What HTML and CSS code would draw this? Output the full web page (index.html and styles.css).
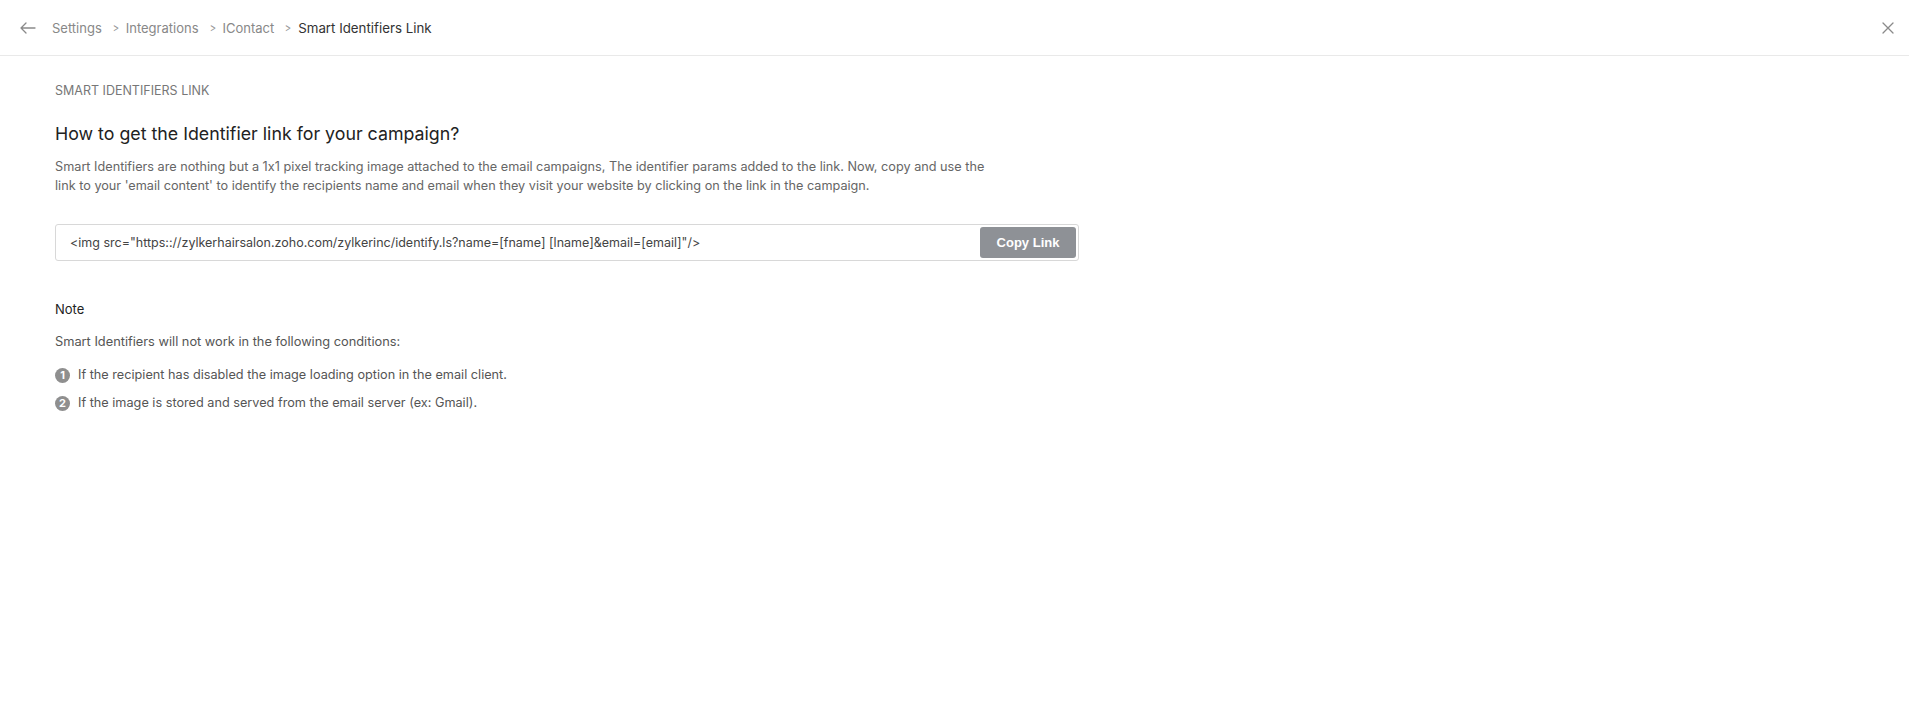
FILE: index.html
```html
<!DOCTYPE html>
<html>
<head>
<meta charset="utf-8">
<link rel="stylesheet" href="styles.css">
</head>
<body>
<header class="topbar">
  <div class="crumbs">
    <span class="back">
      <svg width="16" height="12" viewBox="0 0 16 12"><path d="M6 1L1 6l5 5M1 6h14" fill="none" stroke="#8a8a8a" stroke-width="1.3" stroke-linecap="round" stroke-linejoin="round"/></svg>
    </span>
    <span class="crumb">Settings</span>
    <span class="sep">&gt;</span>
    <span class="crumb">Integrations</span>
    <span class="sep">&gt;</span>
    <span class="crumb">IContact</span>
    <span class="sep">&gt;</span>
    <span class="crumb current">Smart Identifiers Link</span>
  </div>
  <span class="close">
    <svg width="12" height="12" viewBox="0 0 12 12"><path d="M1 1l10 10M11 1L1 11" stroke="#8a8a8a" stroke-width="1.3" stroke-linecap="round"/></svg>
  </span>
</header>
<main class="content">
  <div class="label">SMART IDENTIFIERS LINK</div>
  <h1 class="title">How to get the Identifier link for your campaign?</h1>
  <p class="desc">Smart Identifiers are nothing but a 1x1 pixel tracking image attached to the email campaigns, The identifier params added to the link. Now, copy and use the<br>link to your 'email content' to identify the recipients name and email when they visit your website by clicking on the link in the campaign.</p>
  <div class="linkbox">
    <span class="linktext">&lt;img src="https:://zylkerhairsalon.zoho.com/zylkerinc/identify.ls?name=[fname] [lname]&amp;email=[email]"/&gt;</span>
    <button class="copy">Copy Link</button>
  </div>
  <div class="note">Note</div>
  <p class="note-intro">Smart Identifiers will not work in the following conditions:</p>
  <ul class="conds">
    <li><span class="num">1</span>If the recipient has disabled the image loading option in the email client.</li>
    <li><span class="num">2</span>If the image is stored and served from the email server (ex: Gmail).</li>
  </ul>
</main>
</body>
</html>
```
FILE: styles.css
```css
html, body {
  margin: 0;
  padding: 0;
  background: #fff;
  font-family: Inter, "Noto Sans", sans-serif;
  font-feature-settings: "calt" 0;
  color: #333;
}
.topbar {
  height: 56px;
  border-bottom: 1px solid #e9e9e9;
  display: flex;
  align-items: center;
  justify-content: space-between;
  padding: 0 15px 0 20px;
  box-sizing: border-box;
}
.crumbs {
  display: flex;
  align-items: center;
  font-size: 13px;
}
.back {
  display: flex;
  width: 32px;
}
.crumb {
  color: #888;
}
.crumb.current {
  color: #333;
  font-size: 13.3px;
}
.sep {
  color: #999;
  font-size: 12px;
  margin: 0 6px 0 10px;
  transform: scaleX(0.8);
}
.close {
  display: flex;
}
.content {
  padding: 27px 55px;
}
.label {
  font-size: 12.5px;
  color: #777;
  line-height: 16px;
}
.title {
  font-size: 17.8px;
  font-weight: 400;
  color: #222;
  margin: 23px 0 0;
  line-height: 24px;
}
.desc {
  font-size: 12.7px;
  color: #666;
  line-height: 18.5px;
  margin: 12px 0 0;
}
.linkbox {
  margin-top: 29px;
  width: 1024px;
  height: 37px;
  box-sizing: border-box;
  border: 1px solid #d8d8d8;
  border-radius: 3px;
  display: flex;
  align-items: center;
  justify-content: space-between;
  padding: 0 2px 0 14px;
}
.linktext {
  font-size: 12.5px;
  color: #444;
}
.copy {
  background: #8e9196;
  color: #fff;
  border: none;
  border-radius: 3px;
  font-family: "Liberation Sans", Arial, sans-serif;
  font-weight: bold;
  font-size: 13px;
  width: 96px;
  height: 31px;
}
.note {
  font-size: 13px;
  color: #222;
  margin-top: 39px;
  line-height: 18px;
}
.note-intro {
  font-size: 12.8px;
  color: #555;
  margin: 15px 0 0;
  line-height: 18px;
}
.conds {
  list-style: none;
  margin: 15px 0 0;
  padding: 0;
}
.conds li {
  font-size: 12.7px;
  color: #555;
  display: flex;
  align-items: center;
  line-height: 18px;
  margin-bottom: 10px;
}
.num {
  width: 15px;
  height: 15px;
  border-radius: 50%;
  background: #8f8f8f;
  color: #fff;
  font-size: 11px;
  font-weight: 700;
  display: inline-flex;
  align-items: center;
  justify-content: center;
  margin-right: 8px;
  line-height: 1;
}
```
